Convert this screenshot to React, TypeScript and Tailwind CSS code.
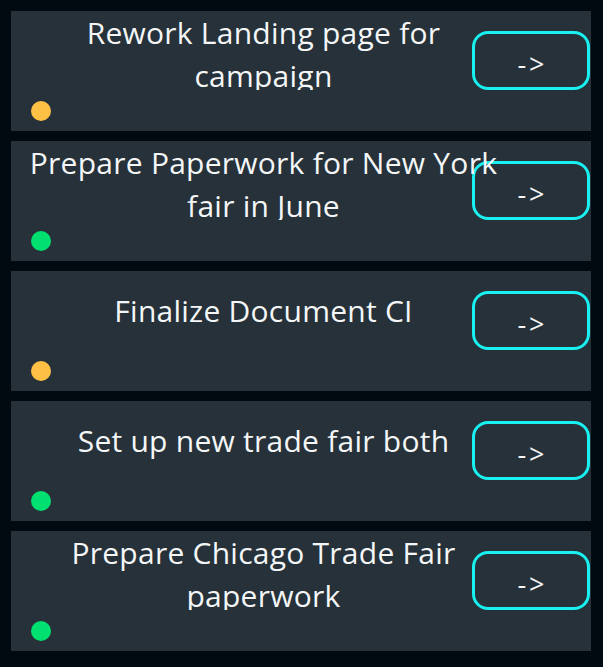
import React from "react";

type Task = { title: string; color: string };

const tasks: Task[] = [
  { title: "Rework Landing page for campaign", color: "bg-[#ffc145]" },
  { title: "Prepare Paperwork for New York fair in June", color: "bg-[#00e070]" },
  { title: "Finalize Document CI", color: "bg-[#ffc145]" },
  { title: "Set up new trade fair both", color: "bg-[#00e070]" },
  { title: "Prepare Chicago Trade Fair paperwork", color: "bg-[#00e070]" },
];

function Card({ task }: { task: Task }) {
  return (
    <div className="flex h-[120px] flex-col bg-[#263139]">
      <div className="flex h-[79px] items-end">
        <div className="relative z-10 ml-[12px] flex h-[79px] w-[481px] shrink-0 flex-col overflow-hidden">
          <p className="my-auto text-center text-[30px] leading-[43px] tracking-[0.25px] text-[#f4f6f7]">{task.title}</p>
        </div>
        <button className="ml-[-32px] flex h-[59px] w-[118px] shrink-0 items-center justify-center rounded-[16px] border-[3px] border-[#19f0f0] pt-[6px] pl-[3px] text-[27px] leading-none tracking-[3px] text-[#f4f6f7]">
          -&gt;
        </button>
      </div>
      <div className={`ml-[20px] mt-[11px] h-[20px] w-[20px] rounded-full ${task.color}`} />
    </div>
  );
}

export default function App() {
  return (
    <div className="min-h-[667px] bg-[#010a11] pt-[11px] pb-[16px]" style={{ fontFamily: '"Open Sans", "Noto Sans", sans-serif' }}>
      <div className="ml-[11px] flex w-[580px] flex-col gap-[10px]">
        {tasks.map((t) => (
          <Card key={t.title} task={t} />
        ))}
      </div>
    </div>
  );
}
